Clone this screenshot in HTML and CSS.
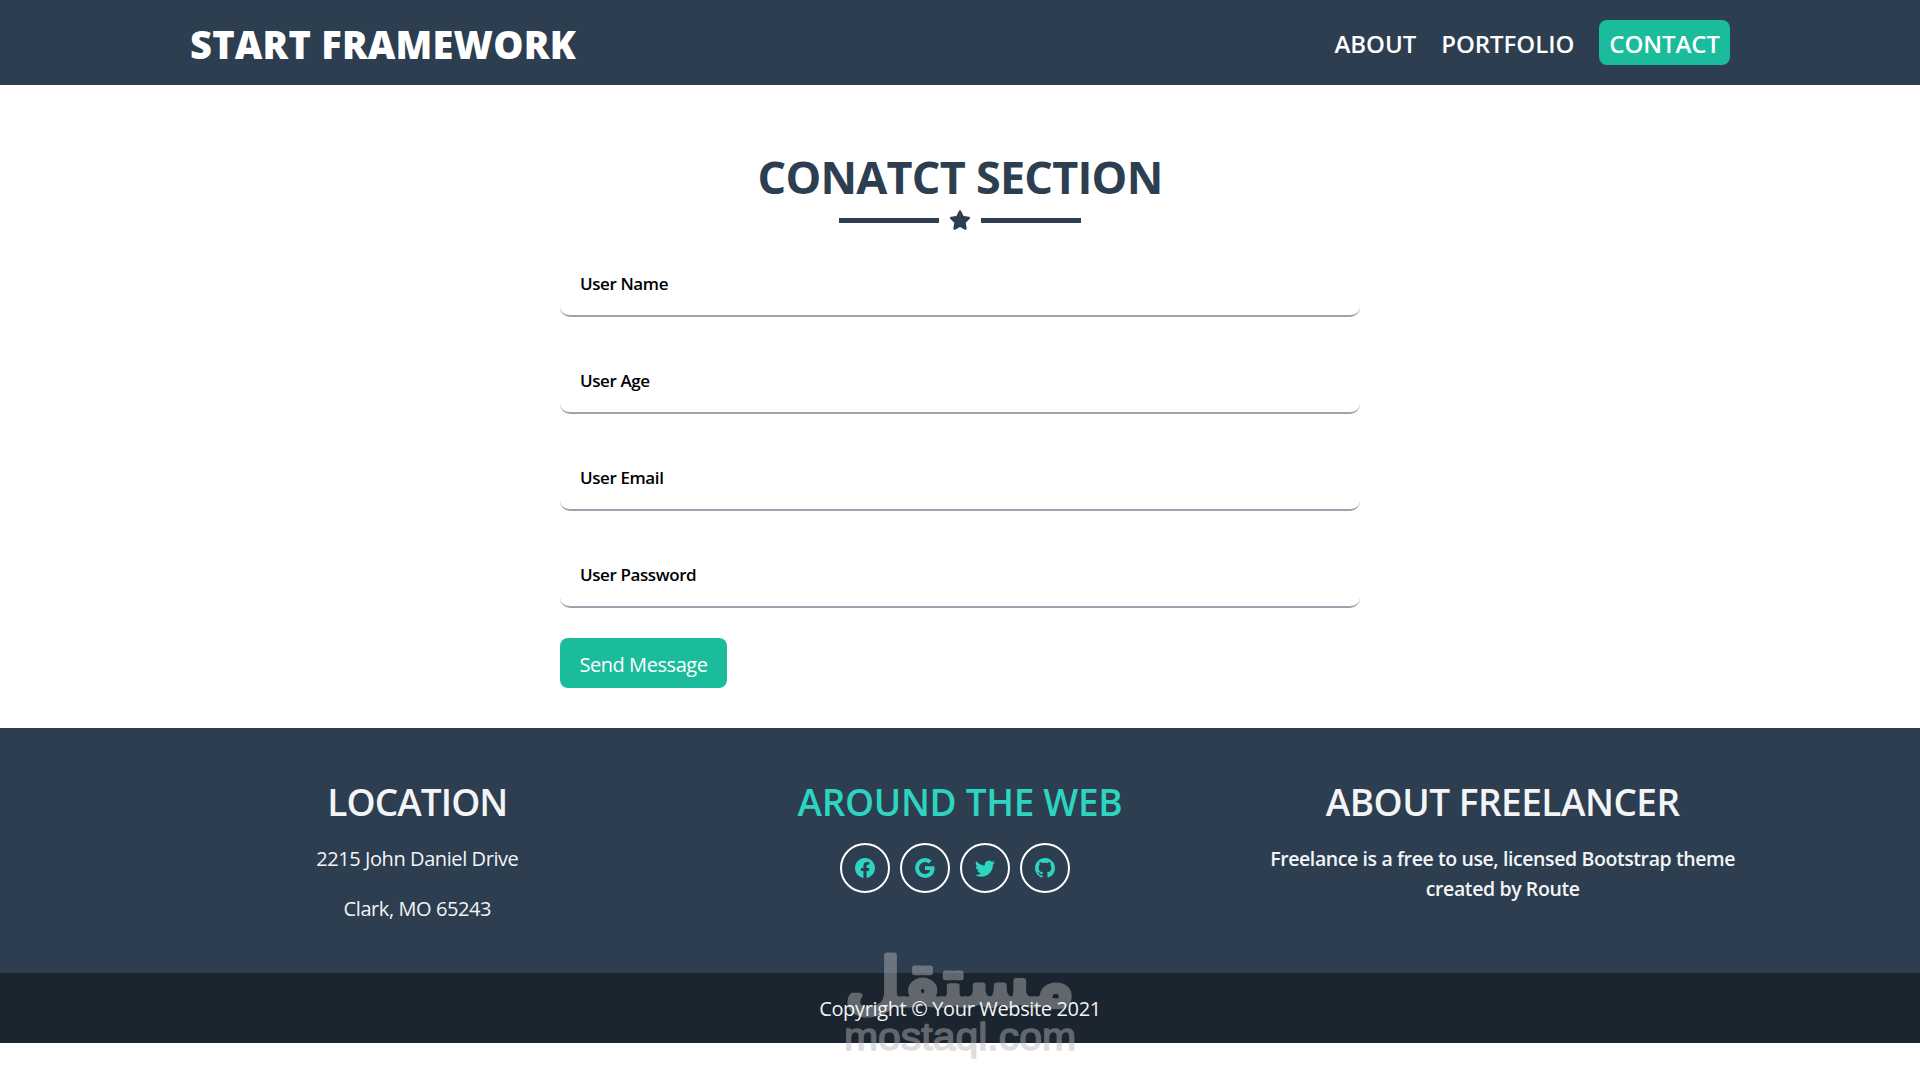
FILE: index.html
```html
<!DOCTYPE html>
<html lang="en">
<head>
    <meta charset="UTF-8">
    <meta name="viewport" content="width=device-width, initial-scale=1.0">
    <title>Start Framework</title>
    <link rel="stylesheet" href="styles.css">
</head>
<body>
    <!-- Navbar -->
    <header class="navbar">
        <div class="container">
            <a class="brand">START FRAMEWORK</a>
            <nav class="nav-links">
                <a class="nav-link">ABOUT</a>
                <a class="nav-link">PORTFOLIO</a>
                <a class="nav-link active">CONTACT</a>
            </nav>
        </div>
    </header>

    <!-- Contact -->
    <main class="contact">
        <h1>CONATCT SECTION</h1>
        <div class="divider">
            <span class="line"></span>
            <svg class="star" viewBox="0 0 576 512" fill="currentColor"><path d="M316.9 18C311.6 7 300.4 0 288.1 0s-23.4 7-28.8 18L195 150.3 51.4 171.5c-12 1.8-22 10.2-25.7 21.7s-.7 24.2 7.9 32.7L137.8 329 113.2 474.7c-2 12 3 24.2 12.9 31.3s23 8 33.8 2.3l128.3-68.5 128.3 68.5c10.8 5.7 23.9 4.9 33.8-2.3s14.9-19.3 12.9-31.3L438.5 329 542.7 225.9c8.6-8.5 11.7-21.2 7.9-32.7s-13.7-19.9-25.7-21.7L381.2 150.3 316.9 18z"/></svg>
            <span class="line"></span>
        </div>
        <form class="contact-form">
            <input type="text" class="field" placeholder="User Name">
            <input type="text" class="field" placeholder="User Age">
            <input type="email" class="field" placeholder="User Email">
            <input type="password" class="field" placeholder="User Password">
            <button type="button" class="send-btn">Send Message</button>
        </form>
    </main>

    <!-- Footer -->
    <footer class="footer">
        <div class="footer-grid">
            <div class="footer-col location">
                <h2>LOCATION</h2>
                <p>2215 John Daniel Drive</p>
                <p>Clark, MO 65243</p>
            </div>
            <div class="footer-col around">
                <h2>AROUND THE WEB</h2>
                <div class="socials">
                    <a class="social"><svg viewBox="0 0 16 16" fill="currentColor"><path d="M16 8.049c0-4.446-3.582-8.05-8-8.05C3.58 0-.002 3.603-.002 8.05c0 4.017 2.926 7.347 6.75 7.951v-5.625h-2.03V8.05H6.75V6.275c0-2.017 1.195-3.131 3.022-3.131.876 0 1.791.157 1.791.157v1.98h-1.009c-.993 0-1.303.621-1.303 1.258v1.51h2.218l-.354 2.326H9.25V16c3.824-.604 6.75-3.934 6.75-7.951"/></svg></a>
                    <a class="social"><svg viewBox="0 0 16 16" fill="currentColor"><path d="M15.545 6.558a9.4 9.4 0 0 1 .139 1.626c0 2.434-.87 4.492-2.384 5.885h.002C11.978 15.292 10.158 16 8 16A8 8 0 1 1 8 0a7.7 7.7 0 0 1 5.352 2.082l-2.284 2.284A4.35 4.35 0 0 0 8 3.166c-2.087 0-3.86 1.408-4.492 3.304a4.8 4.8 0 0 0 0 3.063h.003c.635 1.893 2.405 3.301 4.492 3.301 1.078 0 2.004-.276 2.722-.764h-.003a3.7 3.7 0 0 0 1.599-2.431H8v-3.08z"/></svg></a>
                    <a class="social"><svg viewBox="0 0 16 16" fill="currentColor"><path d="M5.026 15c6.038 0 9.341-5.003 9.341-9.334q.002-.211-.006-.422A6.7 6.7 0 0 0 16 3.542a6.7 6.7 0 0 1-1.889.518 3.3 3.3 0 0 0 1.447-1.817 6.5 6.5 0 0 1-2.087.793A3.286 3.286 0 0 0 7.875 6.03a9.32 9.32 0 0 1-6.767-3.429 3.29 3.29 0 0 0 1.018 4.382A3.3 3.3 0 0 1 .64 6.575v.045a3.29 3.29 0 0 0 2.632 3.218 3.2 3.2 0 0 1-.865.115 3 3 0 0 1-.614-.057 3.28 3.28 0 0 0 3.067 2.277A6.6 6.6 0 0 1 .78 13.58a6 6 0 0 1-.78-.045A9.34 9.34 0 0 0 5.026 15"/></svg></a>
                    <a class="social"><svg viewBox="0 0 16 16" fill="currentColor"><path d="M8 0C3.58 0 0 3.58 0 8c0 3.54 2.29 6.53 5.47 7.59.4.07.55-.17.55-.38 0-.19-.01-.82-.01-1.49-2.01.37-2.53-.49-2.69-.94-.09-.23-.48-.94-.82-1.13-.28-.15-.68-.52-.01-.53.63-.01 1.08.58 1.23.82.72 1.21 1.87.87 2.33.66.07-.52.28-.87.51-1.07-1.78-.2-3.64-.89-3.64-3.95 0-.87.31-1.59.82-2.15-.08-.2-.36-1.02.08-2.12 0 0 .67-.21 2.2.82.64-.18 1.32-.27 2-.27s1.36.09 2 .27c1.53-1.04 2.2-.82 2.2-.82.44 1.1.16 1.92.08 2.12.51.56.82 1.27.82 2.15 0 3.07-1.87 3.75-3.65 3.95.29.25.54.73.54 1.48 0 1.07-.01 1.93-.01 2.2 0 .21.15.46.55.38A8.01 8.01 0 0 0 16 8c0-4.42-3.58-8-8-8"/></svg></a>
                </div>
            </div>
            <div class="footer-col about">
                <h2>ABOUT FREELANCER</h2>
                <p>Freelance is a free to use, licensed Bootstrap theme<br>created by Route</p>
            </div>
        </div>
    </footer>
    <div class="copyright">
        <!-- Watermark behind the copyright line -->
        <svg class="watermark" viewBox="0 0 240 120">
            <text class="mark-ar" x="120" y="55" text-anchor="middle" direction="rtl" textLength="230" lengthAdjust="spacingAndGlyphs">مستقل</text>
            <text class="mark-en" x="120" y="100" text-anchor="middle" textLength="232" lengthAdjust="spacingAndGlyphs">mostaql.com</text>
        </svg>
        <p>Copyright © Your Website 2021</p>
    </div>
</body>
</html>
```
FILE: styles.css
```css
* {
    margin: 0;
    padding: 0;
    box-sizing: border-box;
}

body {
    min-height: 100vh;
    font-family: 'Segoe UI', 'Open Sans', sans-serif;
    background-color: #fff;
    font-size: 20px;
}

.navbar {
    height: 85px;
    background-color: #2c3e50;
    color: #fff;
}

.container {
    width: 1540px;
    height: 100%;
    margin: 0 auto;
    display: flex;
    justify-content: space-between;
    align-items: center;
}

.brand {
    font-size: 38px;
    font-weight: 800;
    line-height: 44px;
    letter-spacing: 0.2px;
    padding-top: 2px;
}

.nav-links {
    display: flex;
    align-items: center;
    gap: 25px;
}

.nav-link {
    font-size: 24px;
    font-weight: 600;
    line-height: 37px;
    letter-spacing: -0.05px;
    padding: 5px 0 3px;
}

.nav-link.active {
    padding: 5px 10px 3px;
    background-color: #1abc9c;
    border-radius: 8px;
}

.contact {
    padding: 69px 0 40px;
}

.contact h1 {
    font-size: 45px;
    font-weight: 700;
    line-height: 45px;
    letter-spacing: -0.78px;
    text-align: center;
    color: #2c3e50;
}

.divider {
    display: flex;
    justify-content: center;
    align-items: center;
    gap: 10px;
    margin-top: 11px;
    color: #2c3e50;
}

.line {
    width: 100px;
    height: 5px;
    background-color: #2c3e50;
}

.star {
    width: 22px;
    height: 20px;
}

.contact-form {
    width: 800px;
    margin: 32px auto 0;
}

.field {
    display: block;
    width: 100%;
    height: 55px;
    margin-bottom: 42px;
    padding: 10px 20px 20px;
    border: 0;
    border-bottom: 2px solid #9ca3af;
    border-radius: 10px;
    background: transparent;
    font-family: inherit;
    font-size: 17px;
    font-weight: 600;
    line-height: 23px;
    letter-spacing: -0.4px;
    outline: none;
}

.field::placeholder {
    color: #000;
    opacity: 1;
}

.send-btn {
    display: block;
    width: 167px;
    height: 50px;
    margin-top: -12px;
    padding-top: 2px;
    border: none;
    border-radius: 8px;
    background-color: #1abc9c;
    color: #fff;
    font-family: inherit;
    font-size: 20px;
    letter-spacing: -0.43px;
}

.footer {
    height: 245px;
    padding-top: 52px;
    background-color: #2c3e50;
    color: #f3f4f6;
}

.footer-grid {
    width: 1628px;
    margin: 0 auto;
    display: grid;
    grid-template-columns: repeat(3, 1fr);
    text-align: center;
}

.footer-col h2 {
    font-size: 37px;
    font-weight: 600;
    line-height: 44px;
    margin-bottom: 20px;
}

.footer-col p {
    line-height: 30px;
    margin-bottom: 20px;
    letter-spacing: -0.42px;
}

.location h2 {
    letter-spacing: -0.9px;
}

.footer-col.around h2 {
    margin-bottom: 19px;
    color: #2dd4bf;
    letter-spacing: -0.33px;
}

.about h2 {
    letter-spacing: -0.5px;
}

.footer-col.about p {
    font-size: 19.5px;
    font-weight: 600;
    letter-spacing: -0.4px;
}

.socials {
    display: flex;
    justify-content: center;
    gap: 10px;
    padding-right: 10px;
}

.social {
    width: 50px;
    height: 50px;
    border: 2px solid #fff;
    border-radius: 50%;
    display: flex;
    justify-content: center;
    align-items: center;
    color: #2dd4bf;
}

.social svg {
    width: 20px;
    height: 20px;
}

.copyright {
    position: relative;
    height: 70px;
    background-color: #1a252f;
    color: #f3f4f6;
    text-align: center;
    line-height: 72px;
    letter-spacing: -0.36px;
}

.copyright p {
    position: relative;
}

.watermark {
    position: absolute;
    left: 50%;
    top: -23px;
    width: 240px;
    height: 120px;
    margin-left: -120px;
    overflow: visible;
    fill: #b8b8b8;
    stroke: #b8b8b8;
    stroke-linejoin: round;
    opacity: 0.45;
    letter-spacing: 0;
}

.mark-ar {
    font-family: 'DejaVu Sans', sans-serif;
    font-size: 66px;
    stroke-width: 5px;
}

.mark-en {
    font-family: 'Liberation Sans', sans-serif;
    font-size: 38px;
    stroke-width: 1.4px;
}
```
